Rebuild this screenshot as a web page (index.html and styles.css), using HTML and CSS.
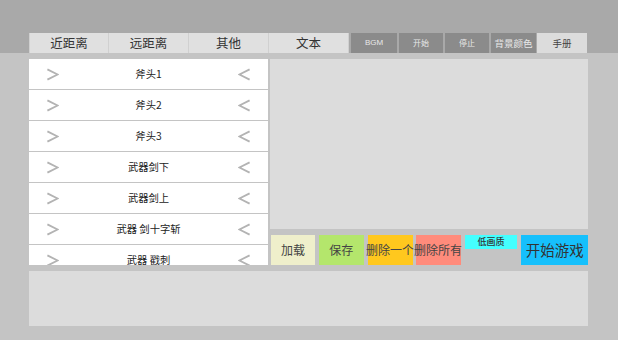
FILE: index.html
```html
<!DOCTYPE html>
<html lang="zh-CN">
<head>
	<meta charset="UTF-8">
	<title>编辑器</title>
	<link rel="stylesheet" href="styles.css">
</head>
<body>
	<svg class="defs" width="0" height="0">
		<defs>
			<symbol id="chev" viewBox="0 0 14 14"><polyline points="1.5,1.5 12.5,7 1.5,12.5" fill="none" stroke="#b3b3b3" stroke-width="2"/></symbol>
		</defs>
	</svg>
	<div id="app">
		<div class="top">
			<ul class="tabs">
				<li class="tab">近距离</li>
				<li class="tab">远距离</li>
				<li class="tab">其他</li>
				<li class="tab">文本</li>
			</ul>
			<ul class="tools">
				<li class="tool t-bgm">BGM</li>
				<li class="tool t-sm">开始</li>
				<li class="tool t-sm">停止</li>
				<li class="tool t-bg">背景颜色</li>
				<li class="tool t-help">手册</li>
			</ul>
		</div>
		<div class="main">
			<div class="list">
				<div class="row"><svg class="arr"><use href="#chev"/></svg><span>斧头1</span><svg class="arr l"><use href="#chev"/></svg></div>
				<div class="row"><svg class="arr"><use href="#chev"/></svg><span>斧头2</span><svg class="arr l"><use href="#chev"/></svg></div>
				<div class="row"><svg class="arr"><use href="#chev"/></svg><span>斧头3</span><svg class="arr l"><use href="#chev"/></svg></div>
				<div class="row"><svg class="arr"><use href="#chev"/></svg><span>武器剑下</span><svg class="arr l"><use href="#chev"/></svg></div>
				<div class="row"><svg class="arr"><use href="#chev"/></svg><span>武器剑上</span><svg class="arr l"><use href="#chev"/></svg></div>
				<div class="row"><svg class="arr"><use href="#chev"/></svg><span>武器 剑十字斩</span><svg class="arr l"><use href="#chev"/></svg></div>
				<div class="row"><svg class="arr"><use href="#chev"/></svg><span>武器 戳刺</span><svg class="arr l"><use href="#chev"/></svg></div>
			</div>
			<div class="side">
				<div class="text-box"></div>
				<div class="btns">
					<a class="btn b-load" href="javascript:void(0)">加载</a>
					<a class="btn b-save" href="javascript:void(0)">保存</a>
					<a class="btn b-del" href="javascript:void(0)">删除一个</a>
					<a class="btn b-delall" href="javascript:void(0)">删除所有</a>
					<a class="btn b-low" href="javascript:void(0)">低画质</a>
					<a class="btn b-start" href="javascript:void(0)">开始游戏</a>
				</div>
			</div>
		</div>
		<div class="bottom"></div>
	</div>
</body>
</html>
```
FILE: styles.css
```css
body,div,ul,li,span{
	margin:0;
	padding:0;
}
ul{
	list-style-type: none;
}
a{
	text-decoration: none;
	outline: none;
}
body{
	font:12px/1.2 "Noto Sans CJK SC", "Noto Sans", sans-serif;
	color:#333;
	background:#c4c4c4;
}
.defs{
	position:absolute;
	width:0;
	height:0;
}
#app{
	width:618px;
	height:340px;
	overflow:hidden;
	background:#c4c4c4;
}
.top{
	display:flex;
	height:53px;
	box-sizing:border-box;
	padding:33px 0 0 29px;
	background:#a9a9a9;
}
.tabs{
	display:flex;
}
.tab{
	width:80px;
	height:20px;
	box-sizing:border-box;
	border-right:1px solid #d0d0d0;
	background:#e0e0e0;
	text-align:center;
	font-size:12.5px;
	line-height:20px;
	color:#333;
}
.tabs .tab:first-child{
	border-left:1px solid #d0d0d0;
}
.tools{
	display:flex;
	gap:2px;
	margin-left:2px;
}
.tool{
	height:20px;
	background:#8b8b8b;
	color:#e8e8e8;
	text-align:center;
	line-height:20px;
	font-size:8px;
}
.t-bgm{
	width:46px;
	font-family:"Liberation Sans", Arial, sans-serif;
	font-size:8px;
}
.t-sm{
	width:44px;
}
.t-bg{
	width:45px;
	font-size:9.5px;
}
.t-help{
	width:50px;
	background:#dcdcdc;
	color:#444;
	font-size:9.5px;
	margin-left:-1px;
}
.main{
	display:flex;
	gap:2px;
	padding:6px 0 0 29px;
}
.list{
	width:239px;
	height:206px;
	overflow:hidden;
	display:flex;
	flex-direction:column;
	gap:1px;
}
.row{
	flex:none;
	display:flex;
	align-items:center;
	justify-content:space-between;
	height:30px;
	padding:0 17px 0 17px;
	background:#fff;
	font-size:10.3px;
	color:#222;
}
.arr{
	display:block;
	width:13px;
	height:13px;
}
.arr.l{
	transform:scaleX(-1);
}
.side{
	width:318px;
}
.text-box{
	height:170px;
	background:#dcdcdc;
}
.btns{
	display:flex;
	align-items:flex-start;
	gap:4px;
	margin-top:6px;
	padding-left:1px;
}
.btn{
	display:flex;
	align-items:center;
	justify-content:center;
	width:45px;
	height:30px;
	white-space:nowrap;
	font-size:12px;
	color:#444;
}
.b-load{
	width:44px;
	background:#efefcb;
}
.b-save{
	background:#b4e66c;
}
.b-del{
	background:#ffc81e;
	margin-right:-1px;
}
.b-delall{
	background:#ff8b7b;
}
.b-low{
	width:53px;
	height:14px;
	background:#44ffff;
	font-size:9px;
	font-weight:500;
	color:#333;
}
.b-start{
	width:67px;
	background:#16c0fc;
	font-size:14.5px;
	color:#333;
}
.bottom{
	height:55px;
	margin:6px 30px 0 29px;
	background:#dcdcdc;
}
```
